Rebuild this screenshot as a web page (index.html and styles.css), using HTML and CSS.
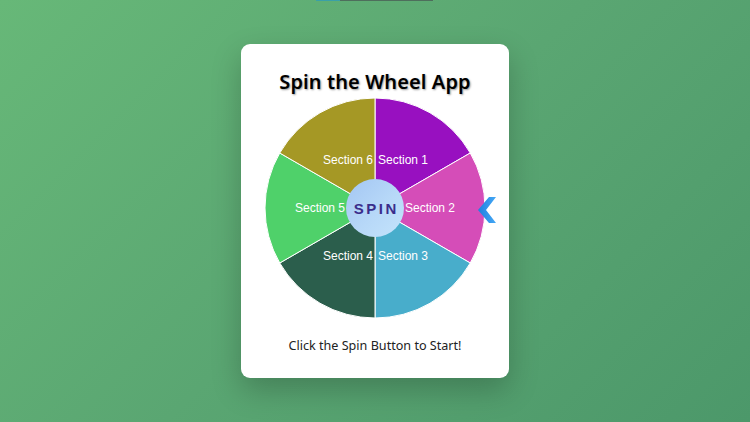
FILE: index.html
```html
<!DOCTYPE html>
<html>
<head>
<meta charset="utf-8">
<link rel="stylesheet" href="styles.css">
</head>
<body>
<div class="topbar"><span class="topbar-fill"></span></div>
<div class="card">
  <h1 class="title">Spin the Wheel App</h1>
  <div class="wheel">
    <svg class="wheel-svg" width="220" height="220" viewBox="0 0 220 220">
      <g stroke="#ffffff" stroke-width="1">
        <path d="M110 110 L110 0 A110 110 0 0 1 205.26 55 Z" fill="#9810c0"/>
        <path d="M110 110 L205.26 55 A110 110 0 0 1 205.26 165 Z" fill="#d54db8"/>
        <path d="M110 110 L205.26 165 A110 110 0 0 1 110 220 Z" fill="#48adcb"/>
        <path d="M110 110 L110 220 A110 110 0 0 1 14.74 165 Z" fill="#2b5e4c"/>
        <path d="M110 110 L14.74 165 A110 110 0 0 1 14.74 55 Z" fill="#4fd16a"/>
        <path d="M110 110 L14.74 55 A110 110 0 0 1 110 0 Z" fill="#a59825"/>
      </g>
      <g class="labels" fill="#ffffff">
        <text x="113" y="66">Section 1</text>
        <text x="140" y="114">Section 2</text>
        <text x="113" y="162">Section 3</text>
        <text x="108" y="162" text-anchor="end">Section 4</text>
        <text x="80" y="114" text-anchor="end">Section 5</text>
        <text x="108" y="66" text-anchor="end">Section 6</text>
      </g>
    </svg>
    <button class="spin">SPIN</button>
    <svg class="pointer" width="22" height="30" viewBox="0 0 22 30">
      <defs>
        <linearGradient id="pg" x1="0" y1="0" x2="1" y2="0">
          <stop offset="0" stop-color="#1f7fe0"/>
          <stop offset="1" stop-color="#45a9f5"/>
        </linearGradient>
      </defs>
      <polygon points="13,1 20,1 10,14 20,27 13,27 2,14" fill="url(#pg)"/>
    </svg>
  </div>
  <p class="status">Click the Spin Button to Start!</p>
</div>
</body>
</html>
```
FILE: styles.css
```css
html, body {
  margin: 0;
  padding: 0;
  height: 100%;
}
body {
  background: linear-gradient(135deg, #67b878 0%, #5aa672 50%, #4c986a 100%);
  display: flex;
  align-items: center;
  justify-content: center;
  font-family: "Noto Sans", "Open Sans", sans-serif;
  overflow: hidden;
  position: relative;
}
.topbar {
  position: absolute;
  top: 0;
  left: 316px;
  width: 117px;
  height: 1px;
  background: #4e6e5c;
}
.topbar-fill {
  display: block;
  width: 24px;
  height: 1px;
  background: #3aa0a8;
}
.card {
  width: 220px;
  padding: 24px 24px 24px 24px;
  height: 286px;
  background: #ffffff;
  border-radius: 9px;
  box-shadow: 0 12px 30px rgba(0, 0, 0, 0.22);
  display: flex;
  flex-direction: column;
  align-items: center;
}
.title {
  margin: 0;
  font-size: 20px;
  line-height: 28px;
  font-weight: 600;
  color: #000;
  white-space: nowrap;
  letter-spacing: 0.1px;
  text-shadow: 1px 1px 2px rgba(0, 0, 0, 0.4);
}
.wheel {
  position: relative;
  width: 220px;
  height: 220px;
  margin-top: 2px;
}
.wheel-svg {
  display: block;
}
.labels {
  font-family: "Liberation Sans", Arial, sans-serif;
  font-size: 12px;
}
.spin {
  position: absolute;
  left: 81px;
  top: 81px;
  width: 58px;
  height: 58px;
  border-radius: 50%;
  border: none;
  padding: 0;
  background: linear-gradient(135deg, #a3c6f3 0%, #b7d8f8 55%, #c4e4fb 100%);
  color: #3a2d8c;
  font-family: "Liberation Sans", Arial, sans-serif;
  font-weight: 700;
  font-size: 15px;
  letter-spacing: 2.5px;
  text-indent: 2.5px;
}
.pointer {
  position: absolute;
  left: 211px;
  top: 98px;
}
.status {
  margin: 19px 0 0 0;
  font-size: 12.6px;
  line-height: 18px;
  color: #222;
  white-space: nowrap;
}
```
